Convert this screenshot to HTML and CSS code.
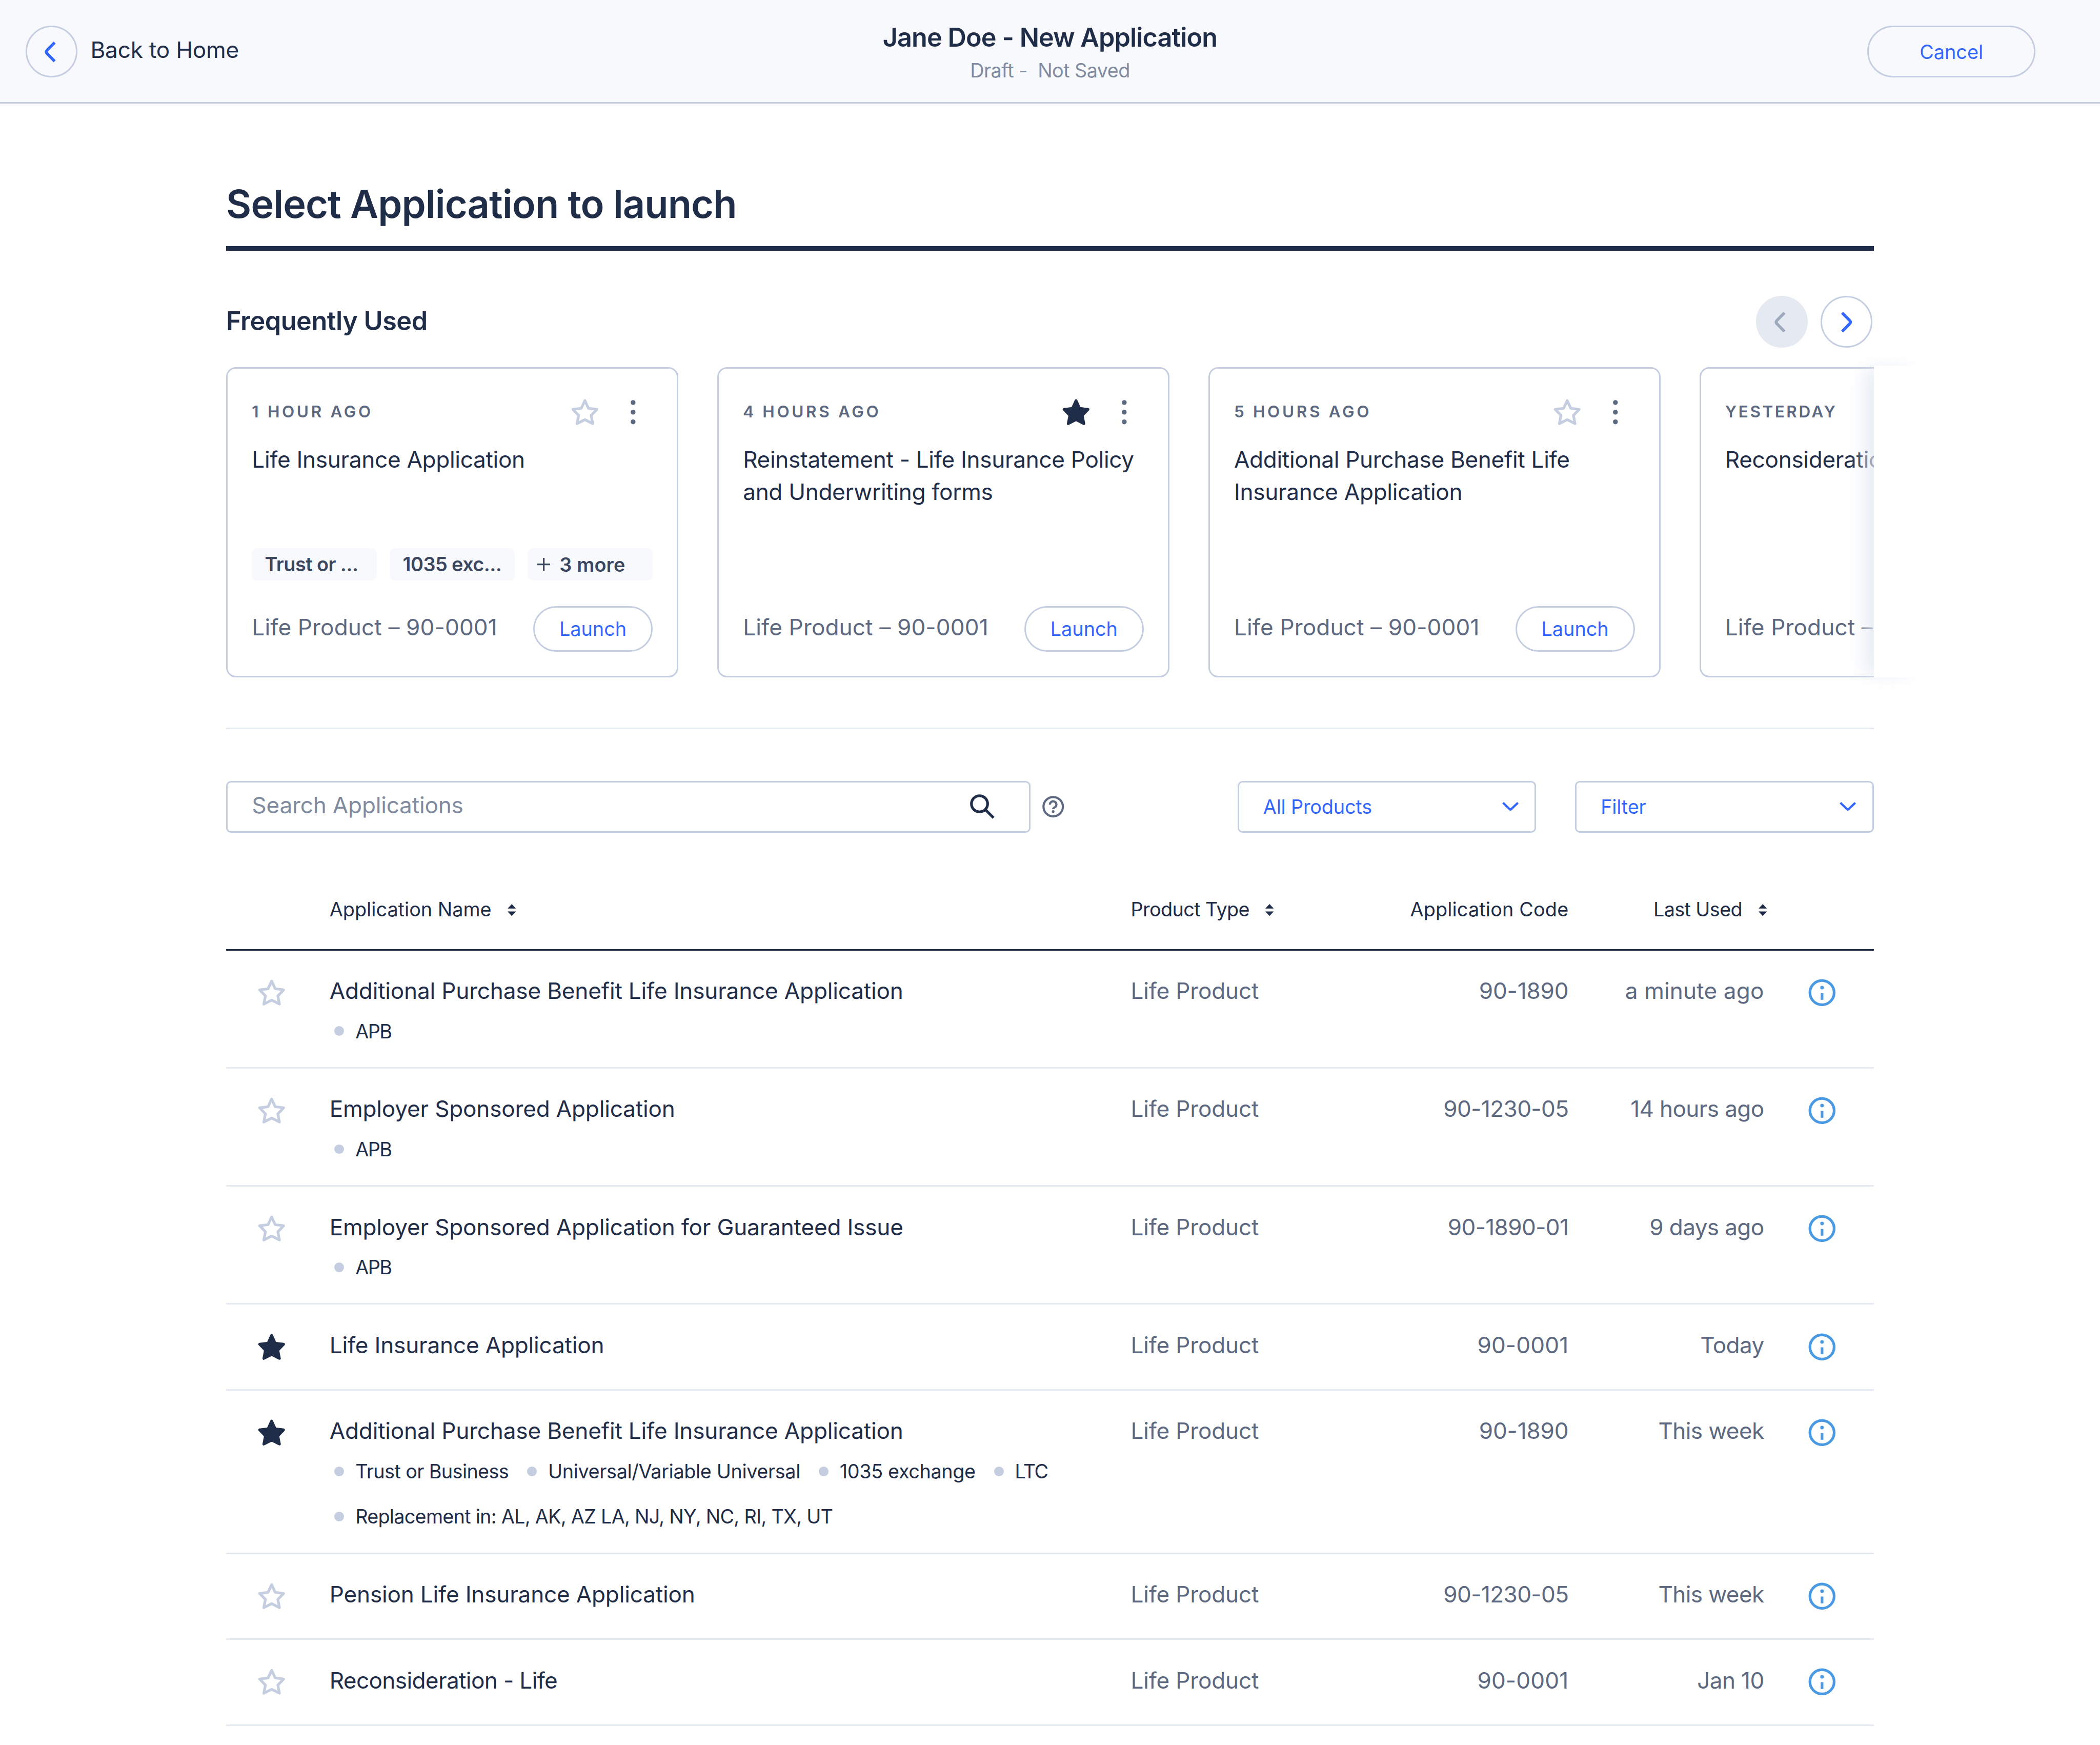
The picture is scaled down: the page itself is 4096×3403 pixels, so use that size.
FILE: index.html
```html
<!DOCTYPE html>
<html lang="en">
<head>
    <meta charset="UTF-8">
    <meta name="viewport" content="width=device-width, initial-scale=1.0">
    <title>Jane Doe - New Application</title>
    <link rel="stylesheet" href="styles.css">
</head>
<body>

    <!-- shared icons -->
    <svg class="sprite" aria-hidden="true">
        <symbol id="star" viewBox="0 0 24 24">
            <path d="M12 4.83L14.2 9.6L19.42 10.3L15.85 14L16.85 19.1L12 16.6L7.15 19.1L8.15 14L4.58 10.3L9.8 9.6Z" stroke="currentColor" stroke-width="1.67" stroke-linejoin="round"/>
        </symbol>
        <symbol id="dots" viewBox="0 0 24 24">
            <circle cx="12" cy="6" r="1.5" fill="currentColor"/>
            <circle cx="12" cy="12" r="1.5" fill="currentColor"/>
            <circle cx="12" cy="18" r="1.5" fill="currentColor"/>
        </symbol>
        <symbol id="chevron-left" viewBox="0 0 16 16">
            <path d="M9.7 2.2L5 7Q4.1 8 5 9L9.7 13.8" fill="none" stroke="currentColor" stroke-width="1.8"/>
        </symbol>
        <symbol id="chevron-right" viewBox="0 0 16 16">
            <path d="M5.4 2.2L10.1 7Q11 8 10.1 9L5.4 13.8" fill="none" stroke="currentColor" stroke-width="1.8"/>
        </symbol>
        <symbol id="chevron-down" viewBox="0 0 10.2 5.6">
            <path d="M.5 .5L4.7 4.5Q5.1 4.9 5.5 4.5L9.7 .5" fill="none" stroke="currentColor" stroke-width="1.35"/>
        </symbol>
        <symbol id="sort" viewBox="0 0 5.2 7.4">
            <path d="M2.6 0L5.2 2.8H0ZM2.6 7.4L0 4.6H5.2Z" fill="currentColor"/>
        </symbol>
        <symbol id="info" viewBox="0 0 24 24">
            <circle cx="12" cy="12" r="7.5" fill="none" stroke="currentColor" stroke-width="1.67"/>
            <circle cx="12" cy="8.9" r="1.1" fill="currentColor"/>
            <path d="M12 12.2V16.4" stroke="currentColor" stroke-width="1.67"/>
        </symbol>
    </svg>

    <header class="topbar">
        <a class="back">
            <span class="round-btn"><svg><use href="#chevron-left"/></svg></span>
            <span class="back-label">Back to Home</span>
        </a>
        <div class="topbar-title">
            <h1>Jane Doe - New Application</h1>
            <p>Draft -&nbsp; Not Saved</p>
        </div>
        <button class="pill cancel">Cancel</button>
    </header>

    <main class="page">
        <h2 class="page-title">Select Application to launch</h2>

        <div class="section-head">
            <h3>Frequently Used</h3>
            <button class="round-btn disabled"><svg><use href="#chevron-left"/></svg></button>
            <button class="round-btn"><svg><use href="#chevron-right"/></svg></button>
        </div>

        <section class="carousel">
            <div class="track">
                <article class="card">
                    <div class="card-head">
                        <span class="card-time">1 HOUR AGO</span>
                        <svg class="star"><use href="#star"/></svg>
                        <svg class="dots"><use href="#dots"/></svg>
                    </div>
                    <p class="card-name">Life Insurance Application</p>
                    <div class="chips">
                        <span class="chip">Trust or ...</span>
                        <span class="chip">1035 exc...</span>
                        <span class="chip chip-more"><svg viewBox="0 0 8 8"><path d="M4 0V8M0 4H8" stroke="currentColor" stroke-width="1"/></svg>3 more</span>
                    </div>
                    <div class="card-foot">
                        <span class="card-product">Life Product – 90-0001</span>
                        <button class="pill launch">Launch</button>
                    </div>
                </article>
                <article class="card">
                    <div class="card-head">
                        <span class="card-time">4 HOURS AGO</span>
                        <svg class="star active"><use href="#star"/></svg>
                        <svg class="dots"><use href="#dots"/></svg>
                    </div>
                    <p class="card-name">Reinstatement - Life Insurance Policy and Underwriting forms</p>
                    <div class="card-foot">
                        <span class="card-product">Life Product – 90-0001</span>
                        <button class="pill launch">Launch</button>
                    </div>
                </article>
                <article class="card">
                    <div class="card-head">
                        <span class="card-time">5 HOURS AGO</span>
                        <svg class="star"><use href="#star"/></svg>
                        <svg class="dots"><use href="#dots"/></svg>
                    </div>
                    <p class="card-name">Additional Purchase Benefit Life Insurance Application</p>
                    <div class="card-foot">
                        <span class="card-product">Life Product – 90-0001</span>
                        <button class="pill launch">Launch</button>
                    </div>
                </article>
                <article class="card">
                    <div class="card-head">
                        <span class="card-time card-day">YESTERDAY</span>
                    </div>
                    <p class="card-name">Reconsideration - Life</p>
                    <div class="card-foot">
                        <span class="card-product">Life Product – 90-0001</span>
                    </div>
                </article>
            </div>
            <div class="edge"></div>
        </section>

        <div class="toolbar">
            <div class="search">
                <span>Search Applications</span>
                <svg viewBox="0 0 24 24"><circle cx="10.33" cy="10.33" r="5"/><path d="M13.9 13.9L19 19"/></svg>
            </div>
            <svg class="help" viewBox="0 0 16 16">
                <circle cx="8" cy="8" r="6"/>
                <path d="M6 6.7A2 2 0 1 1 9.1 8.3Q8 8.8 8 9.5"/>
                <circle class="help-dot" cx="8" cy="11" r=".83"/>
            </svg>
            <div class="select select-first">All Products<svg><use href="#chevron-down"/></svg></div>
            <div class="select">Filter<svg><use href="#chevron-down"/></svg></div>
        </div>

        <section class="table">
            <div class="row row-head">
                <span></span>
                <span class="sortable">Application Name<svg><use href="#sort"/></svg></span>
                <span class="sortable tight">Product Type<svg><use href="#sort"/></svg></span>
                <span class="right loose">Application Code</span>
                <span class="sortable right tight">Last Used<svg><use href="#sort"/></svg></span>
                <span></span>
            </div>

            <div class="row">
                <svg class="star"><use href="#star"/></svg>
                <div class="name">Additional Purchase Benefit Life Insurance Application
                    <ul class="tags"><li class="short">APB</li></ul>
                </div>
                <span>Life Product</span>
                <span class="right">90-1890</span>
                <span class="right loose">a minute ago</span>
                <svg class="info"><use href="#info"/></svg>
            </div>
            <div class="row">
                <svg class="star"><use href="#star"/></svg>
                <div class="name">Employer Sponsored Application
                    <ul class="tags"><li class="short">APB</li></ul>
                </div>
                <span>Life Product</span>
                <span class="right tight">90-1230-05</span>
                <span class="right tight">14 hours ago</span>
                <svg class="info"><use href="#info"/></svg>
            </div>
            <div class="row">
                <svg class="star"><use href="#star"/></svg>
                <div class="name">Employer Sponsored Application for Guaranteed Issue
                    <ul class="tags"><li class="short">APB</li></ul>
                </div>
                <span>Life Product</span>
                <span class="right tight">90-1890-01</span>
                <span class="right tight">9 days ago</span>
                <svg class="info"><use href="#info"/></svg>
            </div>
            <div class="row">
                <svg class="star active"><use href="#star"/></svg>
                <div class="name">Life Insurance Application</div>
                <span>Life Product</span>
                <span class="right loose">90-0001</span>
                <span class="right tight">Today</span>
                <svg class="info"><use href="#info"/></svg>
            </div>
            <div class="row">
                <svg class="star active"><use href="#star"/></svg>
                <div class="name">Additional Purchase Benefit Life Insurance Application
                    <ul class="tags">
                        <li class="tight">Trust or Business</li>
                        <li>Universal/Variable Universal</li>
                        <li>1035 exchange</li>
                        <li class="short">LTC</li>
                        <li class="states">Replacement in: AL, AK, AZ LA, NJ, NY, NC, RI, TX, UT</li>
                    </ul>
                </div>
                <span>Life Product</span>
                <span class="right">90-1890</span>
                <span class="right tight">This week</span>
                <svg class="info"><use href="#info"/></svg>
            </div>
            <div class="row">
                <svg class="star"><use href="#star"/></svg>
                <div class="name">Pension Life Insurance Application</div>
                <span>Life Product</span>
                <span class="right tight">90-1230-05</span>
                <span class="right tight">This week</span>
                <svg class="info"><use href="#info"/></svg>
            </div>
            <div class="row">
                <svg class="star"><use href="#star"/></svg>
                <div class="name tight">Reconsideration - Life</div>
                <span>Life Product</span>
                <span class="right loose">90-0001</span>
                <span class="right tight">Jan 10</span>
                <svg class="info"><use href="#info"/></svg>
            </div>
        </section>
    </main>

</body>
</html>
```
FILE: styles.css
```css
/* 1rem = 1/130 of the window width */
html {
    font-size: calc(100vw / 130);
}

* {
    box-sizing: border-box;
}

body {
    margin: 0;
    background: #fff;
    color: #1f2d48;
    font-family: Inter, "Liberation Sans", sans-serif;
    font-size: 1.4rem;
    line-height: 2rem;
    letter-spacing: -0.006rem;
    overflow: hidden;
}

h1, h2, h3, p, ul {
    margin: 0;
    padding: 0;
    font-weight: 600;
}

svg {
    display: block;
    flex: none;
}

.sprite {
    position: absolute;
    width: 0;
    height: 0;
}

/* buttons */
.round-btn {
    display: flex;
    align-items: center;
    justify-content: center;
    width: 3.2rem;
    height: 3.2rem;
    padding: 0;
    border: 0.1rem solid #c5cee0;
    border-radius: 50%;
    background: none;
    color: #3366ff;
}

.round-btn svg {
    width: 1.6rem;
    height: 1.6rem;
}

.round-btn.disabled {
    border-color: #e4e9f2;
    background: #e4e9f2;
    color: #9ea9bb;
}

.pill {
    padding: 0;
    border: 0.1rem solid #c5cee0;
    border-radius: 1.6rem;
    background: none;
    color: #3366ff;
    font-family: inherit;
    font-size: 1.2rem;
    line-height: 1.6rem;
}

/* top bar */
.topbar {
    display: grid;
    grid-template-columns: 1fr auto 1fr;
    align-items: start;
    height: 6.4rem;
    padding: 0 1.6rem;
    background: #f8f9fd;
    border-bottom: 0.1rem solid #c5cee0;
}

.back {
    display: flex;
    gap: 0.8rem;
    padding-top: 1.6rem;
}

.back-label {
    line-height: 3rem;
}

.topbar-title {
    padding-top: 1.12rem;
    text-align: center;
}

.topbar-title h1 {
    font-size: 1.6rem;
    line-height: 2.4rem;
    letter-spacing: -0.03rem;
}

.topbar-title p {
    padding-top: 0.05rem;
    color: #808b9f;
    font-size: 1.2rem;
    font-weight: 400;
    line-height: 1.6rem;
    letter-spacing: -0.018rem;
}

.cancel {
    justify-self: end;
    width: 10.4rem;
    height: 3.2rem;
    margin: 1.6rem 2.4rem 0 0;
}

/* page */
.page {
    width: 102rem;
    margin: 0 auto;
    padding-top: 4.65rem;
}

.page-title {
    padding-bottom: 0.97rem;
    border-bottom: 0.3rem solid #1f2d48;
    font-size: 2.4rem;
    line-height: 3.2rem;
    letter-spacing: -0.028rem;
}

.section-head {
    display: flex;
    gap: 0.8rem;
    margin-top: 2.82rem;
    padding-right: 0.1rem;
}

.section-head h3 {
    flex: 1;
    font-size: 1.6rem;
    line-height: 3.1rem;
    letter-spacing: -0.016rem;
}

/* cards */
.carousel {
    position: relative;
    margin-top: 1.2rem;
    padding-bottom: 3.1rem;
    border-bottom: 0.1rem solid #e4e9f2;
}

.track {
    display: flex;
    gap: 2.4rem;
    overflow: hidden;
}

.edge {
    position: absolute;
    top: -0.1rem;
    left: 102rem;
    width: 3.2rem;
    height: 19.3rem;
    background: #fff;
    box-shadow: -0.8rem 0 1rem -0.2rem rgba(228, 233, 242, 0.8);
}

.card {
    display: flex;
    flex-direction: column;
    flex: none;
    width: 28rem;
    height: 19.2rem;
    padding: 1.5rem;
    border: 0.1rem solid #c5cee0;
    border-radius: 0.6rem;
}

.card-head {
    display: flex;
    align-items: center;
    gap: 0.6rem;
    height: 2.4rem;
}

.card-time {
    flex: 1;
    padding-bottom: 0.06rem;
    color: #5c6980;
    font-size: 1rem;
    font-weight: 600;
    line-height: 1.6rem;
    letter-spacing: 0.147rem;
}

.card-day {
    letter-spacing: 0.112rem;
}

.star, .dots, .info {
    width: 2.4rem;
    height: 2.4rem;
}

.star {
    color: #c5cee0;
    fill: none;
}

.star.active {
    color: #1f2d48;
    fill: #1f2d48;
}

.dots {
    color: #5c6980;
}

.card-name {
    margin-top: 0.72rem;
    font-weight: 400;
    letter-spacing: -0.01rem;
}

.chips {
    display: grid;
    grid-template-columns: repeat(3, 1fr);
    gap: 0.8rem;
    margin-top: auto;
}

.chip {
    height: 2rem;
    padding-left: 0.8rem;
    border-radius: 0.3rem;
    background: #f8f9fd;
    color: #3b475f;
    font-size: 1.2rem;
    font-weight: 600;
    line-height: 1.97rem;
    letter-spacing: -0.017rem;
    white-space: nowrap;
}

.chip-more {
    display: flex;
    align-items: center;
    gap: 0.57rem;
    padding-left: 0.6rem;
    letter-spacing: 0.005rem;
}

.chip-more svg {
    width: 0.8rem;
    height: 0.8rem;
}

.card-foot {
    display: flex;
    align-items: center;
    justify-content: space-between;
    height: 2.8rem;
    margin-top: auto;
}

.chips + .card-foot {
    margin-top: 1.6rem;
}

.card-product {
    padding-bottom: 0.18rem;
    color: #5c6980;
    letter-spacing: 0.004rem;
}

.launch {
    width: 7.4rem;
    height: 2.8rem;
}

/* search and filters */
.toolbar {
    display: flex;
    align-items: center;
    margin-top: 3.21rem;
}

.search {
    display: flex;
    align-items: center;
    justify-content: space-between;
    width: 49.8rem;
    height: 3.2rem;
    padding: 0 1.7rem 0 1.5rem;
    border: 0.1rem solid #c5cee0;
    border-radius: 0.3rem;
    color: #808b9f;
}

.search span {
    padding-bottom: 0.18rem;
}

.search svg {
    width: 2.4rem;
    height: 2.4rem;
    fill: none;
    stroke: #1f2d48;
    stroke-width: 1.67;
}

.help {
    width: 1.6rem;
    height: 1.6rem;
    margin-left: 0.6rem;
    fill: none;
    stroke: #5c6980;
    stroke-width: 1.33;
}

.help-dot {
    fill: #5c6980;
    stroke: none;
}

.select {
    display: flex;
    align-items: center;
    justify-content: space-between;
    width: 18.5rem;
    height: 3.2rem;
    margin-left: 2.4rem;
    padding: 0 1rem 0 1.5rem;
    border: 0.1rem solid #c5cee0;
    border-radius: 0.3rem;
    color: #3366ff;
    font-size: 1.2rem;
}

.select-first {
    margin-left: auto;
}

.select svg {
    width: 1.02rem;
    height: 0.56rem;
}

/* table */
.table {
    margin-top: 3.95rem;
}

.row {
    display: grid;
    grid-template-columns: 6.4rem 49.6rem 13.5rem 13.6rem 12.1rem 6.8rem;
    min-height: 5.3rem;
    padding: 1.5rem 0 1.43rem;
    border-bottom: 0.1rem solid #e4e9f2;
    color: #5c6980;
}

.row-head {
    min-height: 0;
    padding: 0 0 1.67rem;
    border-color: #1f2d48;
    color: #1f2d48;
    font-size: 1.2rem;
    line-height: 1.6rem;
    letter-spacing: 0;
}

.right {
    justify-content: flex-end;
    text-align: right;
}

.tight {
    letter-spacing: -0.02rem;
}

.loose {
    letter-spacing: 0.005rem;
}

.sortable {
    display: flex;
    align-items: center;
    gap: 1rem;
}

.sortable svg {
    width: 0.52rem;
    height: 0.74rem;
    margin-top: 0.1rem;
}

.sortable.right svg {
    margin-right: -0.17rem;
}

.row .star {
    margin: -0.1rem 0 0 1.6rem;
}

.info {
    margin: -0.1rem 0 0 2.4rem;
    color: #4a99e3;
}

.name {
    color: #1f2d48;
}

.tags {
    display: flex;
    flex-wrap: wrap;
    gap: 1.2rem 0.84rem;
    margin-top: 0.68rem;
    list-style: none;
    font-size: 1.2rem;
    font-weight: 400;
    line-height: 1.6rem;
    letter-spacing: -0.012rem;
}

.tags li {
    display: flex;
    align-items: center;
    gap: 0.7rem;
    padding-left: 0.3rem;
}

.tags li::before {
    content: "";
    width: 0.6rem;
    height: 0.6rem;
    border-radius: 50%;
    background: #c5cee0;
}

.tags .short {
    letter-spacing: -0.05rem;
}

.tags .states {
    letter-spacing: -0.0235rem;
}
```
